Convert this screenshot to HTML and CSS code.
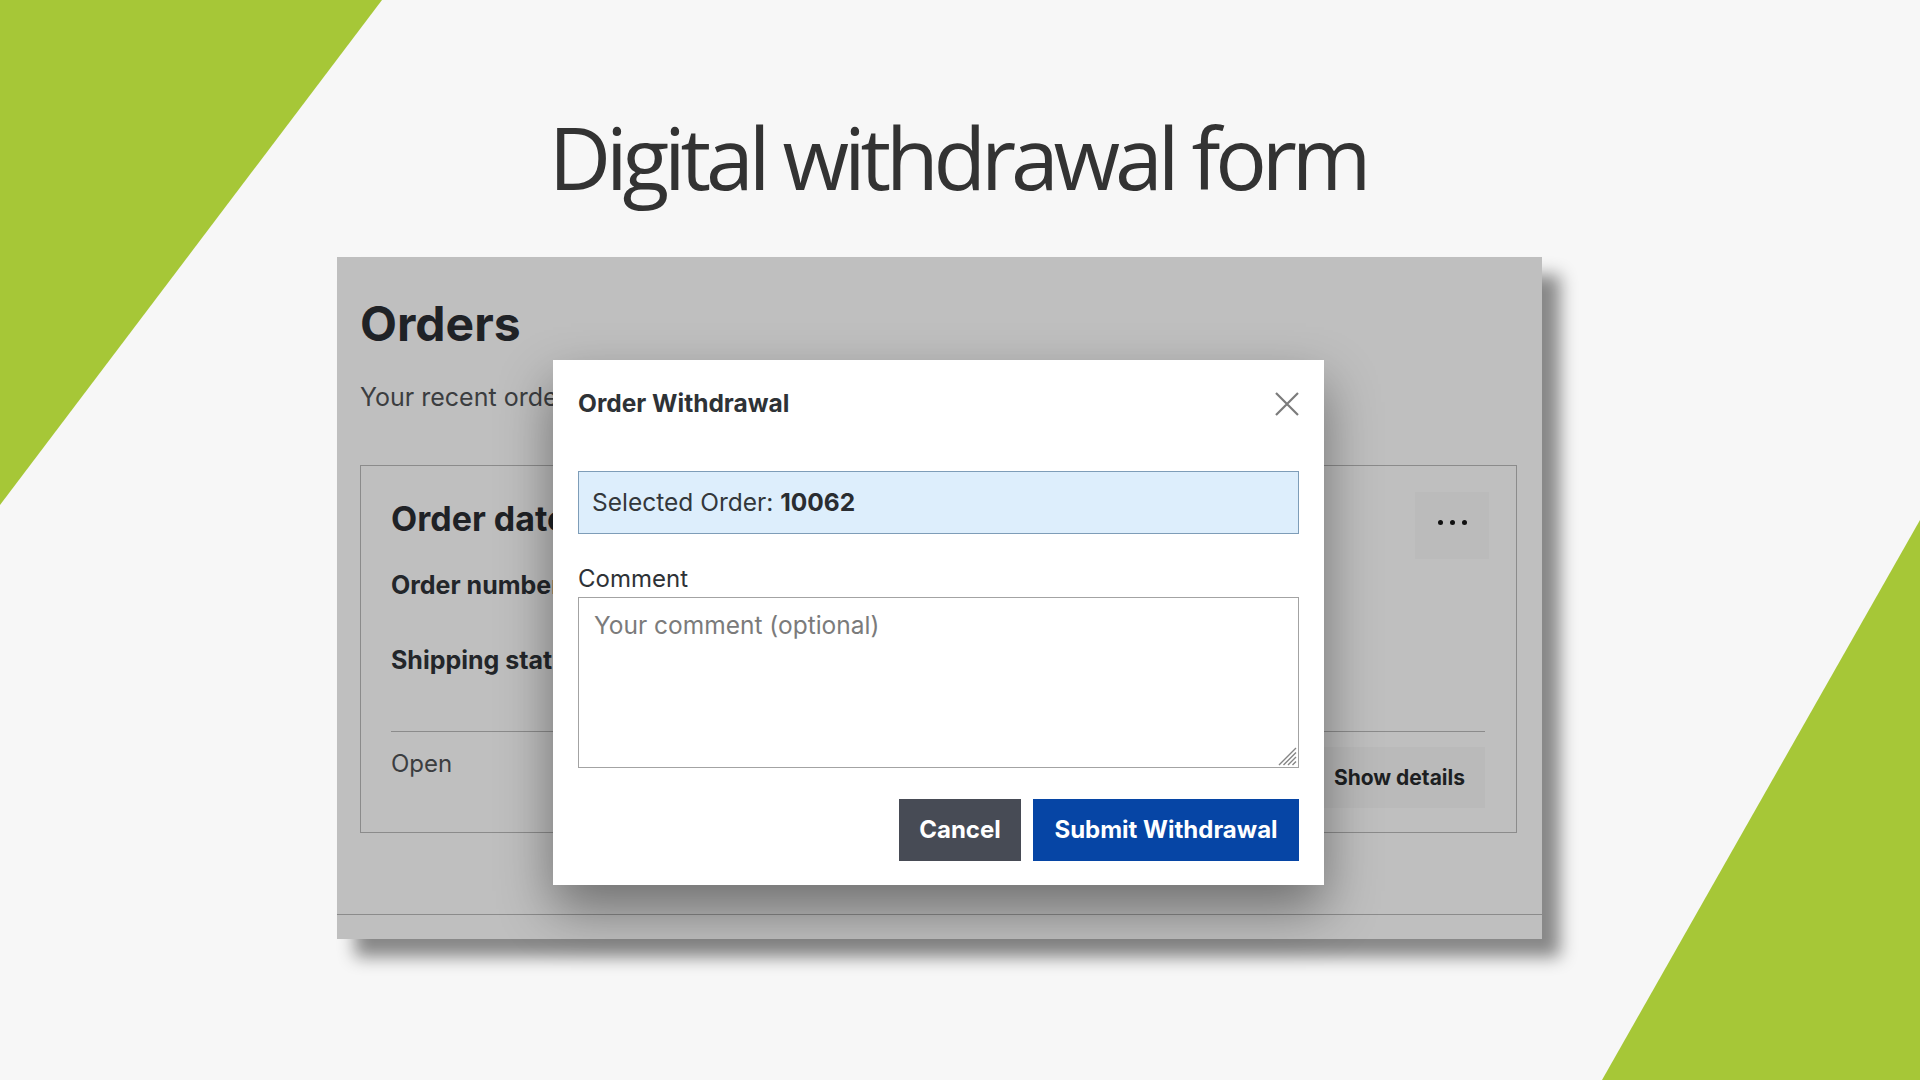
FILE: index.html
```html
<!DOCTYPE html>
<html lang="en">
<head>
<meta charset="utf-8">
<title>Digital withdrawal form</title>
<link rel="stylesheet" href="styles.css">
</head>
<body>
  <svg class="backdrop" width="1920" height="1080" viewBox="0 0 1920 1080" aria-hidden="true">
    <polygon points="0,0 382,0 0,505"/>
    <polygon points="1920,520 1920,1080 1602,1080"/>
  </svg>

  <main class="slide">
    <h1 class="slide-title">Digital withdrawal form</h1>

    <section class="shot">
      <div class="shot-body">
        <h2 class="orders-title">Orders</h2>
        <p class="orders-lead">Your recent orders</p>

        <article class="order-card">
          <div class="card-head">
            <div class="card-info">
              <h3 class="card-title">Order date</h3>
              <p class="field field-first">Order number</p>
              <p class="field field-next">Shipping status</p>
            </div>
            <button class="more-btn" type="button" aria-label="More actions">
              <span class="dot"></span><span class="dot"></span><span class="dot"></span>
            </button>
          </div>
          <hr class="card-rule">
          <div class="card-foot">
            <span class="status">Open</span>
            <button class="details-btn" type="button">Show details</button>
          </div>
        </article>
      </div>
      <div class="shot-foot"></div>

      <div class="modal" role="dialog" aria-labelledby="modal-title">
        <div class="modal-head">
          <h4 class="modal-title" id="modal-title">Order Withdrawal</h4>
          <button class="modal-close" type="button" aria-label="Close">
            <svg width="24" height="24" viewBox="0 0 24 24">
              <path d="M1 1 L23 23 M23 1 L1 23"/>
            </svg>
          </button>
        </div>

        <div class="selected-order">Selected Order:&nbsp;<strong>10062</strong></div>

        <label class="comment-label" for="comment">Comment</label>
        <div class="comment-wrap">
          <textarea class="comment-box" id="comment" placeholder="Your comment (optional)"></textarea>
          <svg class="grip" width="20" height="20" viewBox="0 0 20 20" aria-hidden="true">
            <path d="M19 2 L2 19 M19 6.5 L6.5 19 M19 11 L11 19 M19 15.5 L15.5 19"/>
          </svg>
        </div>

        <div class="modal-actions">
          <button class="btn btn-cancel" type="button">Cancel</button>
          <button class="btn btn-submit" type="button">Submit Withdrawal</button>
        </div>
      </div>
    </section>
  </main>
</body>
</html>
```

FILE: styles.css
```css
* {
  box-sizing: border-box;
}

html,
body {
  margin: 0;
  padding: 0;
}

body {
  position: relative;
  width: 1920px;
  height: 1080px;
  overflow: hidden;
  background: #f7f7f7;
  font-family: Inter, "Liberation Sans", Arial, sans-serif;
}

/* green corner wedges behind the slide */
.backdrop {
  position: absolute;
  left: 0;
  top: 0;
  z-index: 0;
}

.backdrop polygon {
  fill: #a6c737;
}

.slide {
  position: relative;
  z-index: 1;
  display: flex;
  flex-direction: column;
  align-items: center;
}

.slide-title {
  margin: 105px 5px 0 0;
  font-family: "Open Sans", "Liberation Sans", sans-serif;
  font-weight: 400;
  font-size: 86px;
  line-height: 1.2;
  letter-spacing: -0.06em;
  color: #333333;
}

/* dimmed page with the dialog on top */
.shot {
  position: relative;
  align-self: flex-start;
  margin: 49px 0 0 337px;
  width: 1205px;
  height: 682px;
  background: #bfbfbf;
  box-shadow: 18px 18px 16px rgba(0, 0, 0, 0.45);
  display: flex;
  flex-direction: column;
}

.shot-body {
  flex: 1;
  padding: 38px 25px 0 23px;
}

.shot-foot {
  height: 25px;
  border-top: 1px solid #8b8b8b;
}

.orders-title {
  margin: 0;
  font-weight: 700;
  font-size: 48px;
  line-height: 58px;
  color: #1f2226;
}

.orders-lead {
  margin: 29px 0 0;
  font-size: 25px;
  line-height: 30px;
  color: #3b3d40;
  white-space: nowrap;
}

.order-card {
  margin-top: 53px;
  border: 1px solid #8b8b8b;
  padding: 26px 31px 24px 30px;
}

.card-head {
  display: flex;
  justify-content: space-between;
  align-items: flex-start;
}

.card-info {
  margin-top: 7px;
}

.card-title {
  margin: 0;
  font-weight: 700;
  font-size: 34px;
  line-height: 40px;
  color: #1f2226;
  white-space: nowrap;
}

.field {
  margin: 0;
  font-weight: 700;
  font-size: 25px;
  line-height: 30px;
  color: #23262a;
  white-space: nowrap;
}

.field-first {
  margin-top: 31px;
}

.field-next {
  margin-top: 45px;
}

.more-btn {
  width: 74px;
  height: 67px;
  margin-right: -4px;
  border: 0;
  padding: 0 0 6px;
  background: #bbbbbb;
  display: flex;
  align-items: center;
  justify-content: center;
  gap: 7px;
}

.dot {
  width: 5px;
  height: 5px;
  border-radius: 50%;
  background: #111111;
}

.card-rule {
  margin: 56px 0 0;
  border: 0;
  border-top: 1px solid #8b8b8b;
  height: 0;
}

.card-foot {
  margin-top: 15px;
  display: flex;
  justify-content: space-between;
  align-items: flex-start;
}

.status {
  margin-top: 2px;
  font-size: 24px;
  line-height: 29px;
  color: #3b3d40;
}

.details-btn {
  height: 61px;
  border: 0;
  padding: 0 20px;
  background: #bababa;
  font-family: inherit;
  font-weight: 700;
  font-size: 21px;
  line-height: 61px;
  color: #1d1f22;
}

/* dialog */
.modal {
  position: absolute;
  left: 216px;
  top: 103px;
  width: 771px;
  height: 525px;
  padding: 29px 25px 24px;
  background: #ffffff;
  box-shadow: 0 24px 50px rgba(0, 0, 0, 0.42);
  display: flex;
  flex-direction: column;
}

.modal-head {
  height: 29px;
  display: flex;
  justify-content: space-between;
  align-items: center;
}

.modal-title {
  margin: 0;
  font-weight: 700;
  font-size: 24.5px;
  line-height: 29px;
  color: #2e3236;
}

.modal-close {
  width: 24px;
  height: 24px;
  padding: 0;
  border: 0;
  background: none;
  display: block;
}

.modal-close svg {
  display: block;
}

.modal-close path {
  stroke: #7b7b7b;
  stroke-width: 2.2;
  fill: none;
}

.selected-order {
  margin-top: 53px;
  height: 63px;
  padding: 0 13px;
  border: 1px solid #7e9db8;
  background: #ddeefc;
  display: flex;
  align-items: center;
  font-size: 24.5px;
  line-height: 29px;
  color: #33373b;
}

.selected-order strong {
  font-weight: 700;
  color: #2a2d31;
}

.comment-label {
  margin-top: 30px;
  font-size: 24px;
  line-height: 29px;
  color: #2e3236;
}

.comment-wrap {
  position: relative;
  margin-top: 4px;
  height: 171px;
}

.comment-box {
  display: block;
  width: 100%;
  height: 100%;
  margin: 0;
  padding: 13px 15px;
  border: 1px solid #a3a3a3;
  border-radius: 0;
  resize: none;
  background: #ffffff;
  font-family: inherit;
  font-size: 24.5px;
  line-height: 29px;
  color: #2e3236;
}

.comment-box::placeholder {
  color: #7b7b7b;
}

/* resize grip in the textarea corner */
.grip {
  position: absolute;
  right: 2px;
  bottom: 2px;
}

.grip path {
  stroke: #858585;
  stroke-width: 1.4;
  fill: none;
}

.modal-actions {
  margin-top: 31px;
  display: flex;
  justify-content: flex-end;
  gap: 12px;
}

.btn {
  height: 62px;
  border: 0;
  font-family: inherit;
  font-weight: 700;
  font-size: 24px;
  line-height: 62px;
  color: #ffffff;
}

.btn-cancel {
  width: 122px;
  padding: 0;
  background: #474b55;
}

.btn-submit {
  width: 266px;
  padding: 0;
  background: #0645a5;
}
```
